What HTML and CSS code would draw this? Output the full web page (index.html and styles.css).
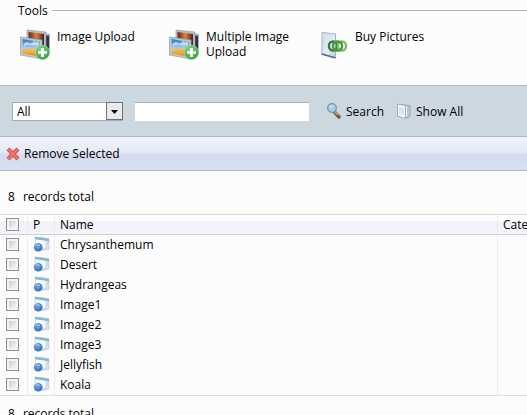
FILE: index.html
```html
<!DOCTYPE html>
<html lang="en">
<head>
<meta charset="utf-8">
<title>Pictures</title>
<link rel="stylesheet" href="styles.css">
</head>
<body>
<svg class="defs" aria-hidden="true">
  <defs>
    <linearGradient id="sky" x1="0" y1="0" x2="0" y2="1"><stop offset="0" stop-color="#2f78c4"/><stop offset=".5" stop-color="#a7cdee"/><stop offset=".62" stop-color="#f6b840"/><stop offset="1" stop-color="#e58a12"/></linearGradient>
    <linearGradient id="dusk" x1="0" y1="0" x2="1" y2="0"><stop offset="0" stop-color="#5c2013"/><stop offset=".5" stop-color="#e08338"/><stop offset="1" stop-color="#4c2019"/></linearGradient>
    <radialGradient id="plus" cx=".4" cy=".3" r=".8"><stop offset="0" stop-color="#8bd685"/><stop offset="1" stop-color="#2c9638"/></radialGradient>
    <linearGradient id="glass" x1="0" y1="0" x2="1" y2="1"><stop offset="0" stop-color="#cfdceb"/><stop offset=".6" stop-color="#e4edf5"/><stop offset="1" stop-color="#b9cadc"/></linearGradient>
    <radialGradient id="ball" cx=".4" cy=".3" r=".8"><stop offset="0" stop-color="#7dacea"/><stop offset="1" stop-color="#2862b4"/></radialGradient>
    <symbol id="photos" viewBox="0 0 32 32">
      <path d="M13 3 30 5V25L13 22Z" fill="#a9b2bd"/>
      <path d="M24 6 29 7V23L24 21Z" fill="#27344d"/>
      <path d="M7 1 26 3V24L7 22Z" fill="#b4bbc3" stroke="#8d98a5" stroke-width=".6"/>
      <path d="M8.500 3 24 5V19L9 17Z" fill="url(#dusk)"/>
      <path d="M.5 8 22 11V30L.5 26Z" fill="#bdc9d5" stroke="#8b9cad" stroke-width=".7"/>
      <path d="M2.500 10 20 13V28L2.500 24.500Z" fill="url(#sky)"/>
      <path d="M4 15q3-3 5-1t5-2q2 2 5 1v3q-4 1-8 0t-7 1Z" fill="#fff" opacity=".6"/>
      <circle cx="22.500" cy="23.500" r="7.200" fill="url(#plus)" stroke="#b9dfb2" stroke-width=".7"/>
      <path d="M22.500 19v9M18 23.500h9" stroke="#fff" stroke-width="2.700"/>
    </symbol>
    <symbol id="buy" viewBox="0 0 32 32">
      <path d="M4 3.500 17.500 5V28.500L4 24.500Z" fill="url(#glass)" stroke="#9fb2c6"/>
      <path d="M3.500 25 17.500 29" stroke="#5d6f82" stroke-width="1.500"/>
      <g fill="none" stroke-width="2.400">
        <rect x="11" y="12.500" width="8" height="9" rx="4" stroke="#397a37"/>
        <rect x="20" y="12.500" width="8" height="9" rx="4" stroke="#78c162"/>
        <rect x="15" y="12.500" width="9" height="9" rx="4" stroke="#469b3c"/>
      </g>
    </symbol>
    <symbol id="record" viewBox="0 0 16 16">
      <path d="M5.500 1.500 15.500 3.500V13L9 14.500 4 9Z" fill="#d3e2ef" stroke="#b3c6d6" stroke-width=".6"/>
      <path d="M1.500 1 12.500 2.500V12.500L8 13 2 8Z" fill="#f4f9fc" stroke="#b9cbd8" stroke-width=".7"/>
      <path d="M1.500.8 15.500 2.600V5.200L1.500 3.200Z" fill="#86bccb"/>
      <circle cx="4.700" cy="11.200" r="4.300" fill="url(#ball)"/>
      <path d="M2 9q2-2 5 0-1 1-2 1t-3-1Z" fill="#a7c9f1" opacity=".7"/>
    </symbol>
  </defs>
</svg>

<fieldset class="tools">
  <legend>Tools</legend>
  <div class="tool-list">
    <button class="tool" type="button"><svg class="tool-icon" aria-hidden="true"><use href="#photos"/></svg><span>Image Upload</span></button>
    <button class="tool" type="button"><svg class="tool-icon" aria-hidden="true"><use href="#photos"/></svg><span>Multiple Image Upload</span></button>
    <button class="tool" type="button"><svg class="tool-icon" aria-hidden="true"><use href="#buy"/></svg><span>Buy Pictures</span></button>
  </div>
</fieldset>

<form class="search">
  <span class="picker">
    <select aria-label="Filter"><option>All</option></select>
    <svg class="arrow" viewBox="0 0 17 18" aria-hidden="true"><rect x=".5" y=".5" width="16" height="17" fill="#e9ebee" stroke="#6e7277"/><path d="M5 8h7L8.500 12Z" fill="#000"/></svg>
  </span>
  <input class="query" type="text" aria-label="Search text">
  <button class="action" type="button">
    <svg class="icon" viewBox="0 0 16 16" aria-hidden="true"><path d="M8.500 9 13 14" stroke="#755640" stroke-width="3.400" stroke-linecap="round"/><path d="M8.500 8.500 12 12" stroke="#c89b66" stroke-width="1.800"/><circle cx="6" cy="5" r="4.300" fill="#a7d1ea" stroke="#7590a7" stroke-width="1.300"/><path d="M3.500 5q1-3 4-2.500-2 .5-4 2.500Z" fill="#fff"/></svg>
    <span>Search</span>
  </button>
  <button class="action" type="button">
    <svg class="icon" viewBox="0 0 16 16" aria-hidden="true"><path d="M5 2 14 3V13L11 15Z" fill="#dce6ea" stroke="#84939c" stroke-width=".8"/><path d="M3 1.500 12 2.500V14L10 15Z" fill="#e9f1f4" stroke="#84939c" stroke-width=".8"/><path d="M1.500 1 9.500 2.500V15.500L1.500 13Z" fill="#f1f7f9" stroke="#8f9fa9" stroke-width=".8"/><path d="M3 4 8 5V12L3 11Z" fill="#d5e4ea"/></svg>
    <span>Show All</span>
  </button>
</form>

<div class="toolbar">
  <button class="action" type="button">
    <svg class="remove-icon" viewBox="0 0 14 14" aria-hidden="true"><path d="M2 2 12 12M12 2 2 12" stroke="#cf4b4b" stroke-width="4"/><path d="M2 2 12 12M12 2 2 12" stroke="#f4716c" stroke-width="2.400"/></svg>
    <span>Remove Selected</span>
  </button>
</div>

<main>
  <p class="total"><span>8</span><span>records total</span></p>
  <table class="records">
    <colgroup><col class="col-check"><col class="col-icon"><col><col class="col-category"></colgroup>
    <thead>
      <tr><th><input type="checkbox" aria-label="Select all"></th><th>P</th><th>Name</th><th>Category</th></tr>
    </thead>
    <tbody>
      <tr><td><input type="checkbox" aria-label="Select Chrysanthemum"></td><td><svg class="record-icon" aria-hidden="true"><use href="#record"/></svg></td><td>Chrysanthemum</td><td></td></tr>
      <tr><td><input type="checkbox" aria-label="Select Desert"></td><td><svg class="record-icon" aria-hidden="true"><use href="#record"/></svg></td><td>Desert</td><td></td></tr>
      <tr><td><input type="checkbox" aria-label="Select Hydrangeas"></td><td><svg class="record-icon" aria-hidden="true"><use href="#record"/></svg></td><td>Hydrangeas</td><td></td></tr>
      <tr><td><input type="checkbox" aria-label="Select Image1"></td><td><svg class="record-icon" aria-hidden="true"><use href="#record"/></svg></td><td>Image1</td><td></td></tr>
      <tr><td><input type="checkbox" aria-label="Select Image2"></td><td><svg class="record-icon" aria-hidden="true"><use href="#record"/></svg></td><td>Image2</td><td></td></tr>
      <tr><td><input type="checkbox" aria-label="Select Image3"></td><td><svg class="record-icon" aria-hidden="true"><use href="#record"/></svg></td><td>Image3</td><td></td></tr>
      <tr><td><input type="checkbox" aria-label="Select Jellyfish"></td><td><svg class="record-icon" aria-hidden="true"><use href="#record"/></svg></td><td>Jellyfish</td><td></td></tr>
      <tr><td><input type="checkbox" aria-label="Select Koala"></td><td><svg class="record-icon" aria-hidden="true"><use href="#record"/></svg></td><td>Koala</td><td></td></tr>
    </tbody>
  </table>
  <p class="total total-bottom"><span>8</span><span>records total</span></p>
</main>
</body>
</html>
```
FILE: styles.css
```css
* {
  box-sizing: border-box;
}

html {
  scrollbar-width: none;
}

body {
  margin: 0;
  background: #fcfcfc;
  color: #000;
  font: 12px/15px "Segoe UI", "Open Sans", "Noto Sans", sans-serif;
}

button,
input,
select {
  margin: 0;
  color: inherit;
  font: inherit;
}

button {
  padding: 0;
  border: 0;
  background: none;
  text-align: left;
}

svg {
  display: block;
  flex: none;
}

.defs {
  position: absolute;
  width: 0;
  height: 0;
}

.tools {
  min-width: 0;
  margin: 0;
  padding: 3px 0 0 12px;
  border: 0;
}

.tools legend {
  display: flex;
  align-items: center;
  gap: 4px;
  width: 100%;
  padding: 3px 0 0 6px;
}

.tools legend::after {
  content: "";
  flex: 1;
  border-top: 1px solid #b3b7bd;
}

.tool-list {
  display: flex;
  min-height: 64px;
  padding: 8px 0 0 8px;
}

.tool {
  display: flex;
  align-items: flex-start;
  gap: 5px;
  width: 149px;
  padding-right: 10px;
}

.tool-icon {
  width: 32px;
  height: 32px;
}

.search {
  display: flex;
  align-items: center;
  height: 52px;
  padding-left: 12px;
  border: solid #aeb8c2;
  border-width: 1px 0;
  background: #ccd7e0;
}

.picker {
  display: grid;
  align-items: center;
  width: 111px;
  margin-right: 12px;
}

.picker > * {
  grid-area: 1 / 1;
}

.picker select {
  appearance: none;
  width: 100%;
  height: 19px;
  padding: 0 4px;
  border: 1px solid #a5adb4;
  border-radius: 0;
  background: #fff;
  line-height: 17px;
}

.arrow {
  justify-self: end;
  width: 17px;
  height: 18px;
  pointer-events: none;
}

.query {
  width: 174px;
  height: 19px;
  margin-right: 17px;
  padding: 0 4px;
  border: 0;
  border-top: 1px solid #aab1b8;
  background: #fff;
}

.action {
  display: flex;
  align-items: center;
  gap: 4px;
  margin-right: 12px;
  white-space: nowrap;
}

.icon {
  width: 16px;
  height: 16px;
}

.remove-icon {
  width: 14px;
  height: 14px;
}

.toolbar {
  display: flex;
  align-items: center;
  height: 34px;
  padding-left: 6px;
  border-bottom: 1px solid #b4bac8;
  background: linear-gradient(#f2f4fc, #e6eaf7 45%, #d5dbed 55%, #dae0f4);
}

.total {
  display: flex;
  gap: 8px;
  margin: 0;
  padding: 18px 0 10px 8px;
}

.total-bottom {
  padding-top: 10px;
}

.records {
  width: 100%;
  table-layout: fixed;
  border-collapse: separate;
  border-spacing: 0;
}

.col-check {
  width: 28px;
}

.col-icon {
  width: 27px;
}

.col-category {
  width: 29px;
}

.records th,
.records td {
  height: 20px;
  padding: 0 0 0 5px;
  border-right: 1px solid #ececf0;
  font-weight: normal;
  text-align: left;
  vertical-align: middle;
  white-space: nowrap;
  overflow: hidden;
}

.records td {
  padding-bottom: 2px;
}

.records th {
  height: 21px;
  border-top: 1px solid #d4d4d4;
  border-bottom: 1px solid #cfcfcf;
  background: linear-gradient(#fff 30%, #f2f0fb 35%, #f5f5fa);
}

.records th:last-child,
.records td:last-child {
  border-right: 0;
}

.records tbody tr:last-child td {
  height: 21px;
  border-bottom: 1px solid #e0e0e0;
}

.records input {
  display: block;
  appearance: none;
  width: 13px;
  height: 13px;
  margin-left: 1px;
  border: 1px solid #8e8f8f;
  background: linear-gradient(135deg, #c9cdd1, #f8f8f8) content-box, #f4f4f4;
  padding: 2px;
}

.record-icon {
  width: 17px;
  height: 16px;
}
```
